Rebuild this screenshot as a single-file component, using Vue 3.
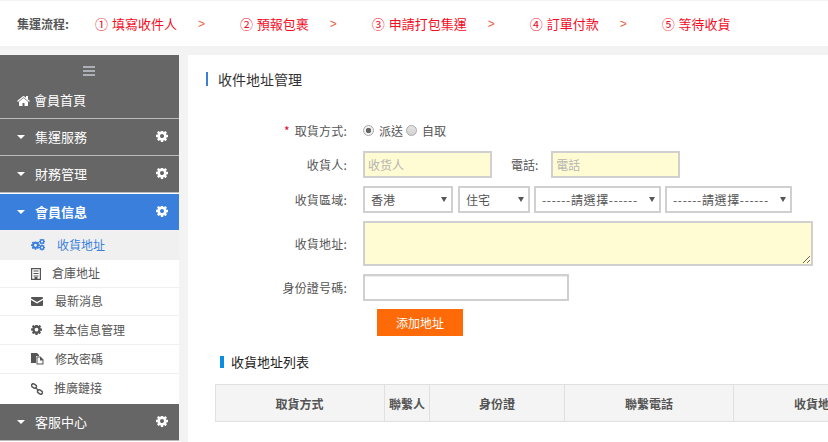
<script setup>
const COG = 'M1024 640q0-106-75-181t-181-75-181 75-75 181 75 181 181 75 181-75 75-181zm512-109v222q0 12-8 23t-20 13l-185 28q-19 54-39 91 35 50 107 138 10 12 10 25t-9 23q-27 37-99 108t-94 71q-12 0-26-9l-138-108q-44 23-91 38-16 136-29 186-7 28-36 28h-222q-14 0-24.5-8.5t-11.5-21.5l-28-184q-49-16-90-37l-141 107q-10 9-25 9-14 0-25-11-126-114-165-168-7-10-7-23 0-12 8-23 15-21 51-66.5t54-70.5q-27-50-41-99l-183-27q-13-2-21-12.5t-8-23.5v-222q0-12 8-23t19-13l186-28q14-46 39-92-40-57-107-138-10-12-10-24 0-10 9-23 26-36 98.5-107.5t94.5-71.5q13 0 26 10l138 107q44-23 91-38 16-136 29-186 7-28 36-28h222q14 0 24.5 8.5t11.5 21.5l28 184q49 16 90 37l142-107q9-9 24-9 13 0 25 10 129 119 165 170 7 8 7 22 0 12-8 23-15 21-51 66.5t-54 70.5q26 50 41 98l183 28q13 2 21 12.5t8 23.5z'
const HOME = 'M1408 992v480q0 26-19 45t-45 19h-384v-384h-256v384h-384q-26 0-45-19t-19-45v-480q0-1 .5-3t.5-3l575-474 575 474q1 2 1 6zm223-69l-62 74q-8 9-21 11h-3q-13 0-21-7l-692-577-692 577q-12 8-24 7-13-2-21-11l-62-74q-8-10-7-23.5t11-21.5l719-599q32-26 76-26t76 26l244 204v-195q0-14 9-23t23-9h192q14 0 23 9t9 23v408l219 182q10 8 11 21.5t-7 23.5z'

const steps = [
  { text: '① 填寫收件人', arrow: true },
  { text: '② 預報包裹', arrow: true },
  { text: '③ 申請打包集運', arrow: true },
  { text: '④ 訂單付款', arrow: true },
  { text: '⑤ 等待收貨', arrow: false },
]

const subItems = [
  { label: '收貨地址', icon: 'cogs', textGap: 12, active: true },
  { label: '倉庫地址', icon: 'building', textGap: 11 },
  { label: '最新消息', icon: 'mail', textGap: 12 },
  { label: '基本信息管理', icon: 'cog', textGap: 11 },
  { label: '修改密碼', icon: 'files', textGap: 11 },
  { label: '推廣鏈接', icon: 'link', textGap: 11 },
]

const columns = ['取貨方式', '聯繫人', '身份證', '聯繫電話', '收貨地址']
</script>

<template>
  <div class="page">
    <header class="steps">
      <strong class="steps-title">集運流程:</strong>
      <template v-for="step in steps" :key="step.text">
        <span class="step">{{ step.text }}</span>
        <span v-if="step.arrow" class="step-arrow">&gt;</span>
      </template>
    </header>

    <div class="body">
      <aside class="sidebar">
        <div class="side-head">
          <svg class="burger" viewBox="0 0 12 10" width="12" height="10">
            <rect width="12" height="2" />
            <rect y="4" width="12" height="2" />
            <rect y="8" width="12" height="2" />
          </svg>
          <div class="home-row">
            <svg class="home-icon" viewBox="0 128 1664 1408" width="13" height="11"><path :d="HOME" /></svg>
            <span class="home-label">會員首頁</span>
          </div>
        </div>

        <div class="group">
          <i class="caret"></i><span class="group-label">集運服務</span>
          <svg class="gear" viewBox="0 0 1536 1536" width="12" height="12"><path :d="COG" /></svg>
        </div>
        <div class="group">
          <i class="caret"></i><span class="group-label">財務管理</span>
          <svg class="gear" viewBox="0 0 1536 1536" width="12" height="12"><path :d="COG" /></svg>
        </div>
        <div class="group group-active">
          <i class="caret"></i><span class="group-label">會員信息</span>
          <svg class="gear" viewBox="0 0 1536 1536" width="12" height="12"><path :d="COG" /></svg>
        </div>

        <ul class="sub-list">
          <li v-for="item in subItems" :key="item.label" class="sub-item" :class="{ active: item.active }">
            <span class="sub-icon">
              <svg v-if="item.icon === 'cogs'" viewBox="0 0 14 12" width="14" height="12">
                <svg x="0" y="2.5" width="9" height="9" viewBox="0 0 1536 1536"><path :d="COG" /></svg>
                <svg x="8" y="0" width="6" height="6" viewBox="0 0 1536 1536"><path :d="COG" /></svg>
                <svg x="8" y="6" width="6" height="6" viewBox="0 0 1536 1536"><path :d="COG" /></svg>
              </svg>
              <svg v-else-if="item.icon === 'building'" viewBox="0 0 10 12" width="10" height="12">
                <path d="M0 0h10v12H0zM1.2 1.2v9.6h7.6V1.2z" fill-rule="evenodd" />
                <path d="M2.5 2.5h5v1h-5zM2.5 5h5v1h-5zM2.5 7.5h5v1h-5zM3.5 9h3v2h-3z" />
              </svg>
              <svg v-else-if="item.icon === 'mail'" viewBox="0 0 12 9" width="12" height="9">
                <path d="M0 1a1 1 0 0 1 1-1h10a1 1 0 0 1 1 1v.6L6 5 0 1.6z" />
                <path d="M0 3l6 3.4L12 3v5a1 1 0 0 1-1 1H1a1 1 0 0 1-1-1z" />
              </svg>
              <svg v-else-if="item.icon === 'cog'" viewBox="0 0 1536 1536" width="11" height="11"><path :d="COG" /></svg>
              <svg v-else-if="item.icon === 'files'" viewBox="0 0 13 12" width="13" height="12">
                <path d="M0 0h6l2 2v1H5v7H0z" />
                <path d="M5.5 3.5h4l3 3v5h-7zM6.5 4.5v6h5V7.5H9V4.5z" fill-rule="evenodd" />
              </svg>
              <svg v-else viewBox="0 0 12 12" width="12" height="12" class="link-icon">
                <rect x="-2.6" y="-1.7" width="5.2" height="3.4" rx="1.7" transform="translate(3 3) rotate(35)" />
                <rect x="-2.6" y="-1.7" width="5.2" height="3.4" rx="1.7" transform="translate(9 9) rotate(35)" />
                <path d="M4.6 4.6l2.8 2.8" />
              </svg>
            </span>
            <span class="sub-label" :style="{ marginLeft: item.textGap + 'px' }">{{ item.label }}</span>
          </li>
        </ul>

        <div class="group group-last">
          <i class="caret"></i><span class="group-label">客服中心</span>
          <svg class="gear" viewBox="0 0 1536 1536" width="12" height="12"><path :d="COG" /></svg>
        </div>
      </aside>

      <main class="main">
        <h1 class="main-title">收件地址管理</h1>

        <form class="form" @submit.prevent>
          <div class="row row-radio">
            <label class="label"><em>*</em> 取貨方式:</label>
            <label class="radio"><input type="radio" name="way" checked /><span>派送</span></label>
            <label class="radio"><input type="radio" name="way" /><span>自取</span></label>
          </div>
          <div class="row">
            <label class="label">收貨人:</label>
            <input class="field field-yellow short" placeholder="收货人" />
            <label class="label-inline">電話:</label>
            <input class="field field-yellow short" placeholder="電話" />
          </div>
          <div class="row row-selects">
            <label class="label">收貨區域:</label>
            <span class="select s-region"><select><option>香港</option></select></span>
            <span class="select s-type"><select><option>住宅</option></select></span>
            <span class="select s-opt"><select><option>------請選擇------</option></select></span>
            <span class="select s-opt"><select><option>------請選擇------</option></select></span>
          </div>
          <div class="row row-area">
            <label class="label">收貨地址:</label>
            <textarea class="field field-yellow area"></textarea>
          </div>
          <div class="row">
            <label class="label">身份證号碼:</label>
            <input class="field id-field" />
          </div>
          <div class="row">
            <button class="submit" type="button">添加地址</button>
          </div>
        </form>

        <h2 class="list-title">收貨地址列表</h2>

        <div class="table">
          <div v-for="col in columns" :key="col" class="th">{{ col }}</div>
        </div>
      </main>
    </div>
  </div>
</template>

<style>
html, body { margin: 0; background: #f3f3f3; }
</style>

<style scoped>
.page {
  width: 828px;
  height: 442px;
  overflow: hidden;
  display: flex;
  flex-direction: column;
  background: #f3f3f3;
  font-family: "Noto Sans CJK TC", "Liberation Sans", sans-serif;
  font-size: 12px;
  color: #555;
}

/* top steps */
.steps {
  flex: none;
  height: 45px;
  margin-top: 1px;
  margin-bottom: 9px;
  background: #fff;
  display: flex;
  align-items: center;
  padding-left: 17px;
  font-size: 13px;
  box-sizing: border-box;
}
.steps-title { font-size: 12px; font-weight: 700; color: #555; width: 78px; }
.step { color: #f30d1f; white-space: nowrap; word-spacing: 1px; }
.step-arrow { color: #f0613c; font-family: "Liberation Sans", sans-serif; font-size: 12px; line-height: 15px; margin: 2px 36px 0 21px; width: 6px; }

.body { flex: 1; display: flex; min-height: 0; }

/* sidebar */
.sidebar { flex: none; width: 179px; margin-right: 9px; background: #fff; }
.side-head {
  height: 64px;
  box-sizing: border-box;
  background: #666;
  padding-top: 11px;
  border-bottom: 1px solid #bbb;
  color: #fff;
  font-size: 13px;
}
.burger { display: block; margin-left: 83px; fill: #aab0b6; }
.home-row { display: flex; align-items: center; margin-top: 14px; padding-left: 17px; height: 20px; }
.home-icon { fill: #fff; margin-right: 4px; }
.home-label { padding-bottom: 2px; }

.group {
  height: 37px;
  box-sizing: border-box;
  display: flex;
  align-items: center;
  background: #666;
  border-bottom: 1px solid #bbb;
  color: #fff;
  font-size: 13px;
  padding-left: 17px;
}
.group-label { margin-left: 10px; flex: 1; padding-bottom: 2px; }
.caret {
  width: 0;
  height: 0;
  border-left: 4px solid transparent;
  border-right: 4px solid transparent;
  border-top: 4px solid #fff;
}
.gear { fill: #fff; margin-right: 11px; }
.group-active {
  height: 36px;
  margin-top: 1px;
  background: #3a7fdb;
  border-bottom: 0;
  font-weight: 700;
}
.group-last { height: 37px; }

.sub-list { list-style: none; margin: 0; padding: 0; background: #fff; }
.sub-item {
  height: 29px;
  box-sizing: border-box;
  display: flex;
  align-items: center;
  padding-left: 31px;
  border-bottom: 1px solid #f0f0f0;
  color: #555;
}
.sub-item:nth-child(1) { height: 30px; border-bottom: 0; }
.sub-item:nth-child(2), .sub-item:nth-child(3) { height: 28px; }
.sub-item:nth-child(6) { height: 30px; border-bottom: 0; }
.sub-item.active { background: #f0f0f0; color: #3a7fdb; }
.sub-icon { display: flex; align-items: center; fill: #555; }
.sub-label { padding-bottom: 2px; }
.sub-item:nth-child(6) .sub-label { padding-bottom: 3px; }
.sub-item.active .sub-icon { fill: #3a7fdb; }
.link-icon { fill: none; stroke: #555; stroke-width: 1.4; }

/* main */
.main {
  flex: 1;
  min-width: 0;
  background: #fff;
  overflow: hidden;
  padding: 17px 0 0 18px;
  box-sizing: border-box;
}
.main-title {
  margin: 0;
  height: 14px;
  line-height: 14px;
  font-size: 14px;
  font-weight: 400;
  color: #333;
  border-left: 2px solid #3a7fdb;
  padding-left: 10px;
}

.form { margin: 32px 0 0 9px; display: flex; flex-direction: column; gap: 8px; }
.row { display: flex; align-items: center; height: 27px; flex: none; }
.row-radio { height: 25px; }
.row-area { height: 45px; }
.label {
  flex: none;
  width: 132px;
  margin-right: 16px;
  text-align: right;
  white-space: nowrap;
  letter-spacing: .2px;
}
.label em { color: #e4002b; font-style: normal; margin-right: 2px; }
.label-inline { margin: 0 13px 0 19px; white-space: nowrap; }

.radio { display: flex; align-items: center; margin-right: 3px; }
.radio input {
  appearance: none;
  width: 11px;
  height: 11px;
  margin: 0 5px 0 0;
  border: 1px solid #aaa;
  border-radius: 50%;
  background: linear-gradient(#e4e4e4, #d2d2d2);
  box-sizing: border-box;
}
.radio input:checked {
  background: radial-gradient(circle, #666 0 2.4px, #f2f2f2 3px);
}

.field {
  box-sizing: border-box;
  height: 27px;
  padding: 0 3px;
  border: 2px solid #d0d0d0;
  outline: none;
  font: inherit;
  color: #555;
  background: #fff;
  box-shadow: inset 0 1px 1px rgba(0, 0, 0, .075);
}
.field::placeholder { color: #b5b5b5; }
.field-yellow { background: #fffbd2; box-shadow: none; }
.short { width: 129px; }
.area { width: 450px; height: 45px; resize: vertical; }
.id-field { width: 206px; }

.select { position: relative; display: block; flex: none; margin-right: 4px; }
.select::after {
  content: "";
  position: absolute;
  right: 6px;
  top: 11px;
  border-left: 3px solid transparent;
  border-right: 3px solid transparent;
  border-top: 5px solid #555;
  pointer-events: none;
}
.select select {
  appearance: none;
  display: block;
  width: 100%;
  height: 27px;
  box-sizing: border-box;
  border: 2px solid #d0d0d0;
  border-radius: 0;
  background: #fff;
  padding: 0 0 0 6px;
  font: inherit;
  color: #555;
  outline: none;
}
.s-region { width: 90px; margin-right: 5px; }
.s-type { width: 72px; }
.s-opt { width: 127px; }
.s-opt select { letter-spacing: .65px; }

.submit {
  margin-left: 162px;
  width: 86px;
  height: 27px;
  border: 0;
  background: #ff6a08;
  color: #fff;
  font: inherit;
}

.list-title {
  margin: 20px 0 0 14px;
  height: 12px;
  display: flex;
  align-items: center;
  line-height: 12px;
  font-size: 13px;
  font-weight: 400;
  color: #222;
  border-left: 4px solid #0a8fe0;
  padding-left: 7px;
}

.table {
  margin: 16px 0 0 9px;
  display: grid;
  grid-template-columns: 170px 45px 135px 169px 169px;
  width: 688px;
  background: #f4f4f4;
  border: solid #e0e0e0;
  border-width: 1px 0;
  box-shadow: inset 1px 0 0 #e0e0e0;
}
.th {
  height: 36px;
  box-sizing: border-box;
  display: flex;
  align-items: center;
  justify-content: center;
  border-right: 1px solid #e0e0e0;
  font-size: 12px;
  font-weight: 700;
  color: #555;
  white-space: nowrap;
}
</style>
